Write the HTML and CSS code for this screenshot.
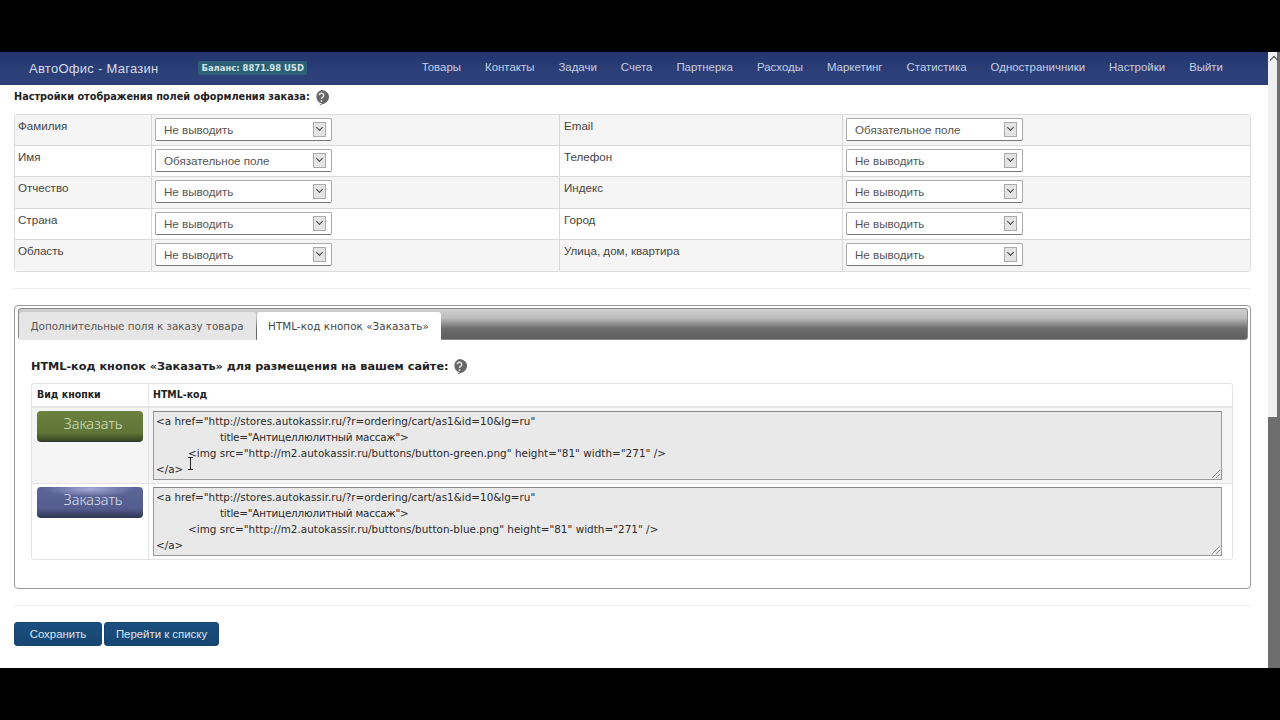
FILE: index.html
```html
<!DOCTYPE html>
<html lang="ru">
<head>
<meta charset="utf-8">
<title>АвтоОфис - Магазин</title>
<link rel="stylesheet" href="styles.css">
</head>
<body>
<div class="bar-black top"></div>
<div class="viewport">
  <div class="page">
    <nav class="nav">
      <span class="brand">АвтоОфис - Магазин</span>
      <span class="balance">Баланс: 8871.98 USD</span>
      <div class="menu">
        <a>Товары</a><a>Контакты</a><a>Задачи</a><a>Счета</a><a>Партнерка</a><a>Расходы</a><a>Маркетинг</a><a>Статистика</a><a>Одностраничники</a><a>Настройки</a><a>Выйти</a>
      </div>
    </nav>
    <main class="content">
      <h2 class="heading first">Настройки отображения полей оформления заказа:
        <svg class="help" viewBox="1 1 14 15"><path d="M8 1a7 6.6 0 1 1-2.6 12.7L8 15.6l.2-2A7 6.6 0 0 1 8 1z" fill="#666"/><path d="M5.9 6a2.1 2 0 1 1 3.2 1.7c-.8.5-1.1.9-1.1 1.7" fill="none" stroke="#ddd" stroke-width="1.5"/><circle cx="8" cy="11.3" r=".9" fill="#ddd"/></svg>
      </h2>
      <table class="fields">
        <tr><td class="c1">Фамилия</td><td class="c2"><div class="select"><span>Не выводить</span><i class="arrow"></i></div></td><td class="c3">Email</td><td class="c4"><div class="select"><span>Обязательное поле</span><i class="arrow"></i></div></td></tr>
        <tr><td class="c1">Имя</td><td class="c2"><div class="select"><span>Обязательное поле</span><i class="arrow"></i></div></td><td class="c3">Телефон</td><td class="c4"><div class="select"><span>Не выводить</span><i class="arrow"></i></div></td></tr>
        <tr><td class="c1">Отчество</td><td class="c2"><div class="select"><span>Не выводить</span><i class="arrow"></i></div></td><td class="c3">Индекс</td><td class="c4"><div class="select"><span>Не выводить</span><i class="arrow"></i></div></td></tr>
        <tr><td class="c1">Страна</td><td class="c2"><div class="select"><span>Не выводить</span><i class="arrow"></i></div></td><td class="c3">Город</td><td class="c4"><div class="select"><span>Не выводить</span><i class="arrow"></i></div></td></tr>
        <tr><td class="c1">Область</td><td class="c2"><div class="select"><span>Не выводить</span><i class="arrow"></i></div></td><td class="c3">Улица, дом, квартира</td><td class="c4"><div class="select"><span>Не выводить</span><i class="arrow"></i></div></td></tr>
      </table>
      <div class="rule rule-a"></div>
      <section class="tabbox">
        <div class="tabstrip">
          <div class="tab">Дополнительные поля к заказу товара</div>
          <div class="tab active">HTML-код кнопок «Заказать»</div>
        </div>
        <h2 class="heading second">HTML-код кнопок «Заказать» для размещения на вашем сайте:
          <svg class="help" viewBox="1 1 14 15"><path d="M8 1a7 6.6 0 1 1-2.6 12.7L8 15.6l.2-2A7 6.6 0 0 1 8 1z" fill="#666"/><path d="M5.9 6a2.1 2 0 1 1 3.2 1.7c-.8.5-1.1.9-1.1 1.7" fill="none" stroke="#ddd" stroke-width="1.5"/><circle cx="8" cy="11.3" r=".9" fill="#ddd"/></svg>
        </h2>
        <table class="codes">
          <tr class="head"><th class="k1">Вид кнопки</th><th>HTML-код</th></tr>
          <tr class="odd">
            <td class="k1"><div class="order green">Заказать</div></td>
            <td><div class="code">
              <div class="ln">&lt;a href="http://stores.autokassir.ru/?r=ordering/cart/as1&amp;id=10&amp;lg=ru"</div>
              <div class="ln i2 tight">title="Антицеллюлитный массаж"&gt;</div>
              <div class="ln i1 wide">&lt;img src="http://m2.autokassir.ru/buttons/button-green.png" height="81" width="271" /&gt;</div>
              <div class="ln">&lt;/a&gt;</div>
              <svg class="grip" viewBox="0 0 10 10"><path d="M1 9 9 1M5 9 9 5" stroke="#888" fill="none"/></svg>
            </div></td>
          </tr>
          <tr>
            <td class="k1"><div class="order blue">Заказать</div></td>
            <td><div class="code">
              <div class="ln">&lt;a href="http://stores.autokassir.ru/?r=ordering/cart/as1&amp;id=10&amp;lg=ru"</div>
              <div class="ln i2 tight">title="Антицеллюлитный массаж"&gt;</div>
              <div class="ln i1 wide">&lt;img src="http://m2.autokassir.ru/buttons/button-blue.png" height="81" width="271" /&gt;</div>
              <div class="ln">&lt;/a&gt;</div>
              <svg class="grip" viewBox="0 0 10 10"><path d="M1 9 9 1M5 9 9 5" stroke="#888" fill="none"/></svg>
            </div></td>
          </tr>
        </table>
      </section>
      <div class="rule rule-b"></div>
      <div class="actions">
        <button class="btn">Сохранить</button>
        <button class="btn">Перейти к списку</button>
      </div>
    </main>
    <svg class="ibeam" viewBox="0 0 7 13"><path d="M1 .5h5M3.5.5v12M1 12.5h5" stroke="#222" fill="none"/></svg>
  </div>
  <div class="scrollbar"><span class="up"></span></div>
</div>
<div class="bar-black bottom"></div>
</body>
</html>
```
FILE: styles.css
```css
* { box-sizing: border-box; }
html, body { margin: 0; height: 720px; overflow: hidden; background: #000; }
body { font-family: "Liberation Sans", Arial, sans-serif; font-size: 12px; color: #333; display: flex; flex-direction: column; }
.bar-black.top { height: 52px; flex: none; }
.bar-black.bottom { height: 52px; flex: none; }
.viewport { height: 616px; flex: none; display: flex; background: #fff; }
.page { position: relative; width: 1268px; flex: none; background: #fff; }

.nav { height: 33px; display: flex; align-items: center; padding: 0 45px 0 29px; background: linear-gradient(#22356e, #2d4079 70%, #2c3f78); color: #c9d2e4; }
.brand { font-size: 13px; letter-spacing: .27px; color: #d5dbe8; }
.balance { margin-left: 40px; padding: 0 3px; height: 14px; background: #2a6176; color: #d6e4e8; font: bold 8.45px/14px "DejaVu Sans", sans-serif; border-radius: 2px; white-space: nowrap; margin-top: -1px; }
.menu { margin-left: auto; display: flex; gap: 24px; font-size: 11.45px; padding-bottom: 3px; }
.menu a { white-space: nowrap; color: #c5cee2; }

.content { padding: 0 17px 0 14px; }
.heading { margin: 0; font: bold 10.82px/16px "DejaVu Sans", sans-serif; font-stretch: condensed; color: #222; display: flex; align-items: center; gap: 4px; }
.heading.first { padding-top: 4px; height: 29px; align-items: flex-start; }
.help { width: 15px; height: 16px; flex: none; margin-top: 1px; }

.fields { width: 1237px; border-collapse: separate; border-spacing: 0; table-layout: fixed; border: 1px solid #ddd; border-radius: 3px; }
.fields td { height: 31px; padding: 0; border-bottom: 1px solid #d8d8d8; vertical-align: top; font-size: 11.6px; color: #444; }
.fields tr:nth-child(3) td { height: 32px; }
.fields tr:last-child td { border-bottom: 0; }
.fields tr:nth-child(odd) td { background: #f5f5f5; }
.c1 { width: 137px; border-right: 1px solid #d8d8d8; padding: 4px 0 0 3px !important; }
.c2 { width: 407px; padding: 3px 0 0 3px !important; }
.c3 { width: 284px; border-left: 1px solid #d8d8d8; border-right: 1px solid #d8d8d8; padding: 4px 0 0 4px !important; }
.c4 { padding: 3px 0 0 3px !important; }
.select { width: 177px; height: 23px; background: #fff; border: 1px solid #aaa; border-bottom-color: #777; border-radius: 2px; display: flex; align-items: center; justify-content: space-between; padding: 0 5px 0 8px; color: #555; }
.arrow { width: 13px; height: 15px; background: #e4e4e4; border: 1px solid #aaa; position: relative; }
.arrow::after { content: ""; position: absolute; left: 3px; top: 2px; width: 4px; height: 4px; border-right: 1.5px solid #444; border-bottom: 1.5px solid #444; transform: rotate(45deg); }

.rule { height: 1px; background: #eee; }
.rule-a { margin-top: 16px; }
.rule-b { margin-top: 16px; }

.tabbox { margin-top: 16px; height: 284px; border: 1px solid #999; border-radius: 4px; padding: 2px 2px 0 3px; background: #fff; }
.tabstrip { height: 32px; display: flex; align-items: flex-end; gap: 1px; background: linear-gradient(#cfcfcf, #bdbdbd 30%, #6d6d6d 65%, #5f5f5f); border: 1px solid #888; border-radius: 3px; }
.tab { height: 28px; padding: 0 12.5px 0 11.5px; font: 10.35px/28px "DejaVu Sans", sans-serif; color: #555; background: #e6e6e6; border-radius: 3px 3px 0 0; white-space: nowrap; margin-bottom: -1px; }
.tab.active { background: #fff; color: #444; padding: 0 12px 0 11px; letter-spacing: .05px; }
.heading.second { margin: 19px 0 0 13px; height: 16px; font-size: 11.25px; font-stretch: normal; gap: 3px; }
.heading.second .help { margin-top: 0; }

.codes { margin: 8px 0 0 13px; width: 1202px; border-collapse: separate; border-spacing: 0; table-layout: fixed; border: 1px solid #e4e4e4; border-radius: 3px; font-size: 12px; }
.codes th { height: 24px; padding: 0 4px 3px; text-align: left; font: bold 10.5px "DejaVu Sans", sans-serif; font-stretch: condensed; color: #222; border-bottom: 2px solid #e4e4e4; }
.codes td { padding: 3px 4px 0; height: 76px; vertical-align: top; border-bottom: 1px solid #e4e4e4; }
.codes tr:last-child td { border-bottom: 0; height: 75px; }
.k1 { width: 117px; border-right: 1px solid #e4e4e4; }
.codes th.k1 { padding-left: 5px; }
.odd td { background: #f5f5f5; }
.order { margin-left: 1px; width: 106px; height: 31px; border-radius: 4px; padding-left: 6px; font: 300 14.5px/25px "Noto Sans", sans-serif; text-align: center; }
.order.green { background: linear-gradient(#6d8240, #5f7437 70%, #3e4f26 92%, #333); color: #d8e2c4; }
.order.blue { background: radial-gradient(ellipse 45px 8px at 50% 2px, #a4a9d8, transparent), linear-gradient(#5c6698, #535c8c 70%, #383f63 92%, #30364f); color: #dde0ee; }
.code { position: relative; width: 1069px; height: 69px; padding: 1px 0 0 2px; background: #e9e9e9; border: 1px solid #999; border-top-color: #888; font: 10.4px/16px "DejaVu Sans", sans-serif; color: #2a2a2a; }
.ln { white-space: pre; }
.i1 { padding-left: 32px; }
.i2 { padding-left: 64px; }
.tight { letter-spacing: -.22px; }
.wide { letter-spacing: .035px; }
.grip { position: absolute; right: 0; bottom: 0; width: 10px; height: 10px; }

.actions { margin-top: 16px; display: flex; gap: 2px; }
.btn { height: 24px; padding: 0; border: 1px solid #174570; border-radius: 3px; background: linear-gradient(#1b4f7f, #174672); color: #dbe6ef; font: 11.4px "Liberation Sans", sans-serif; }
.btn:first-child { width: 88px; }
.btn:last-child { width: 115px; }

.ibeam { position: absolute; left: 187px; top: 405px; width: 7px; height: 13px; }

.scrollbar { flex: 1; position: relative; background: linear-gradient(#f0f0f0 0 365px, #6e6e6e 365px); border-right: 3px solid #6e6e6e; }
.up { position: absolute; left: 3px; top: 5px; width: 6px; height: 6px; border-left: 1.5px solid #444; border-top: 1.5px solid #444; transform: rotate(45deg); }
```
